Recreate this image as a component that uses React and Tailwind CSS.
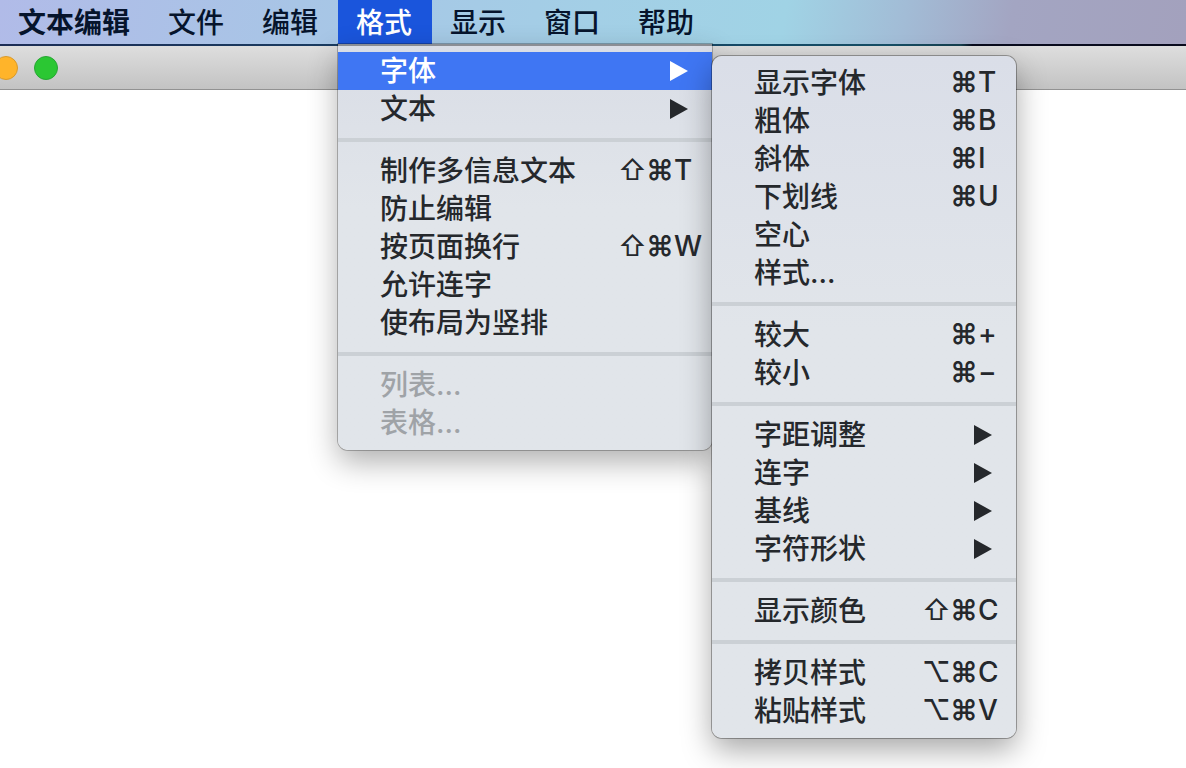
import React, { useState } from "react";

const formatMenu = [
  [{ label: "字体", submenu: true }, { label: "文本", submenu: true }],
  [
    { label: "制作多信息文本", keys: ["⇧", "⌘", "T"] },
    { label: "防止编辑" },
    { label: "按页面换行", keys: ["⇧", "⌘", "W"] },
    { label: "允许连字" },
    { label: "使布局为竖排" },
  ],
  [
    { label: "列表…", disabled: true },
    { label: "表格…", disabled: true },
  ],
];

const fontMenu = [
  [
    { label: "显示字体", keys: ["⌘", "T"] },
    { label: "粗体", keys: ["⌘", "B"] },
    { label: "斜体", keys: ["⌘", "I"] },
    { label: "下划线", keys: ["⌘", "U"] },
    { label: "空心" },
    { label: "样式…" },
  ],
  [
    { label: "较大", keys: ["⌘", "+"] },
    { label: "较小", keys: ["⌘", "−"] },
  ],
  [
    { label: "字距调整", submenu: true },
    { label: "连字", submenu: true },
    { label: "基线", submenu: true },
    { label: "字符形状", submenu: true },
  ],
  [{ label: "显示颜色", keys: ["⇧", "⌘", "C"] }],
  [
    { label: "拷贝样式", keys: ["⌥", "⌘", "C"] },
    { label: "粘贴样式", keys: ["⌥", "⌘", "V"] },
  ],
];

const Shortcut = ({ keys }) => (
  <span className="flex pr-2.5 pb-0.5 font-['Inter','Noto_Sans_CJK_SC',sans-serif]">
    {keys.map((key, i) => (
      <kbd
        key={key}
        className={`w-7 font-['Inter','Noto_Sans_CJK_SC',sans-serif] ${
          i === keys.length - 1 ? "text-left" : "text-center"
        } ${key === "⌘" ? "font-semibold" : key === "⇧" ? "font-normal" : "font-medium"}`}
      >
        {key}
      </kbd>
    ))}
  </span>
);

const Arrow = () => (
  <svg viewBox="0 0 18 20" className="w-[18px] h-5 mr-6" fill="currentColor" aria-hidden="true">
    <path d="M0 0L18 10L0 20Z" />
  </svg>
);

const MenuItem = ({ item, active, children }) => (
  <li role="none" className="relative">
    <button
      type="button"
      role="menuitem"
      disabled={item.disabled}
      aria-haspopup={item.submenu ? "menu" : undefined}
      className={`flex w-full items-center justify-between pl-[42px] h-[38px] leading-[38px] whitespace-nowrap ${
        active ? "bg-[#3f76f3] text-white" : item.disabled ? "text-[#9fa3a7]" : "text-[#25282c]"
      }`}
    >
      <span className="pb-px">{item.label}</span>
      {item.keys && <Shortcut keys={item.keys} />}
      {item.submenu && <Arrow />}
    </button>
    {children}
  </li>
);

const Menu = ({ groups, label, active, submenu, className }) => (
  <ul role="menu" aria-label={label} className={className}>
    {groups.map((group, i) => (
      <React.Fragment key={i}>
        {i > 0 && <li role="separator" className="my-2.5 h-1 bg-[#cbd0d5]" />}
        {group.map((item) => (
          <MenuItem key={item.label} item={item} active={item.label === active}>
            {item.label === active && submenu}
          </MenuItem>
        ))}
      </React.Fragment>
    ))}
  </ul>
);

const barItems = ["文本编辑", "文件", "编辑", "格式", "显示", "窗口", "帮助"];

const App = () => {
  const [open, setOpen] = useState("格式");

  return (
    <div className="flex min-h-screen flex-col overflow-hidden bg-white text-[28px] font-medium font-['Inter','Noto_Sans_CJK_SC',sans-serif]">
      <nav className="relative z-10 bg-[linear-gradient(100deg,#b1bbe8_0%,#a8c5e6_25%,#a3cfe6_50%,#a0d3e5_66%,#a2bcd6_76%,#a3a5c2_85%,#a3a1bd_100%)]">
        <ul role="menubar" className="flex">
          {barItems.map((name, i) => (
            <li key={name} role="none" className="relative">
              <button
                type="button"
                role="menuitem"
                onClick={() => setOpen(open === name ? "" : name)}
                className={`block h-11 pl-[18px] pr-5 leading-[46px] whitespace-nowrap ${
                  open === name ? "bg-[#1a55dc] text-white" : "text-[#06142c]"
                } ${i === 0 ? "font-bold" : ""}`}
              >
                {name}
              </button>
              {name === "格式" && open === name && (
                <Menu
                  label="格式"
                  groups={formatMenu}
                  active="字体"
                  className="absolute left-0 top-full w-[374px] rounded-b-[10px] border-t-2 border-[#8b8e94] bg-linear-to-b from-[#d9dde6] to-[#e1e5ea] to-40% pt-1.5 pb-2 shadow-[0_0_0_1px_#00000040,0_12px_30px_#00000050]"
                  submenu={
                    <Menu
                      label="字体"
                      groups={fontMenu}
                      className="absolute left-full top-1 w-[304px] rounded-[10px] bg-linear-to-b from-[#dadee8] to-[#e1e5ea] to-40% py-2 shadow-[0_0_0_1px_#00000050,0_12px_30px_#00000058]"
                    />
                  }
                />
              )}
            </li>
          ))}
        </ul>
      </nav>
      <div className="h-0.5 bg-[linear-gradient(90deg,#1c2d55_0%,#18476a_50%,#164f66_75%,#17404f_81%,#090b1d_82%)]" />
      <main className="flex flex-1 flex-col">
        <header className="flex h-11 items-center gap-4 border-b border-[#929292] bg-linear-to-b from-[#dedede] to-[#c3c3c3]">
          <button
            type="button"
            aria-label="最小化"
            className="-ml-1.5 size-6 rounded-full border border-[#d99a2b] bg-[#ffb42a]"
          />
          <button
            type="button"
            aria-label="缩放"
            className="size-6 rounded-full border border-[#27a634] bg-[#2bc733]"
          />
        </header>
        <div className="flex-1 bg-white" />
      </main>
    </div>
  );
};

export default App;
